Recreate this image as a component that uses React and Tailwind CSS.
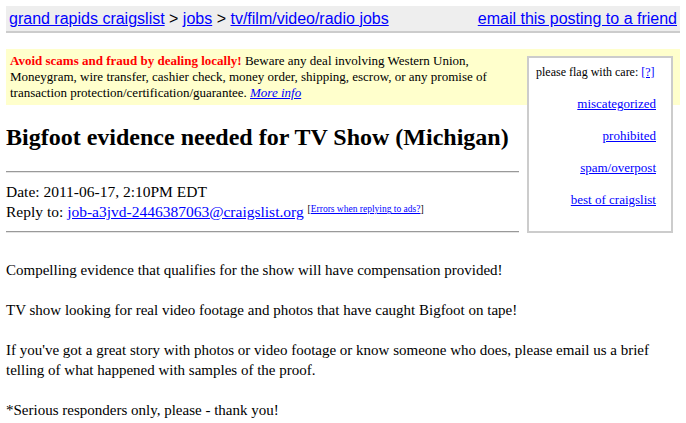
import React from "react";

const flags = ["miscategorized", "prohibited", "spam/overpost", "best of craigslist"];

export default function App() {
  return (
    <div className="min-h-screen bg-white px-[6px] pt-[6px] text-black font-['Liberation_Serif',serif]">
      <div className="flex items-center justify-between h-[27px] bg-[#eeeeee] border-b-2 border-[#cccccc] px-[3px] font-['Liberation_Sans',Arial,sans-serif] text-[16px] leading-[18px]">
        <div>
          <a href="#" className="text-[#0000ff] underline">grand rapids craigslist</a>
          {" > "}
          <a href="#" className="text-[#0000ff] underline">jobs</a>
          {" > "}
          <a href="#" className="text-[#0000ff] underline">tv/film/video/radio jobs</a>
        </div>
        <a href="#" className="text-[#0000ff] underline">email this posting to a friend</a>
      </div>

      <div className="mt-[16px] bg-[#ffffcc] px-[4px] py-[4px] text-[13px] leading-[16px]">
        <div className="float-right mt-[3px] mr-[3px] ml-[8px] w-[146px] h-[177px] border-2 border-[#cccccc] bg-white pt-[6px] pl-[7px] pr-[5px] flex flex-col gap-[16px] leading-[16px]">
          <div className="whitespace-nowrap text-[12px]">
            please flag with care:{" "}
            <a href="#" className="text-[#0000ff] underline">[?]</a>
          </div>
          {flags.map((f) => (
            <a key={f} href="#" className="self-end mr-[10px] text-[13px] text-[#0000ff] underline">
              {f}
            </a>
          ))}
        </div>
        <span className="font-bold text-[#ff0000]">Avoid scams and fraud by dealing locally!</span>{" "}
        Beware any deal involving Western Union,
        <br />
        Moneygram, wire transfer, cashier check, money order, shipping, escrow, or any promise of
        <br />
        transaction protection/certification/guarantee.{" "}
        <a href="#" className="italic text-[#0000ff] underline">More info</a>
      </div>

      <h2 className="mt-[17px] text-[24px] leading-[30px] font-bold whitespace-nowrap">
        Bigfoot evidence needed for TV Show (Michigan)
      </h2>
      <hr className="mt-[19px] overflow-hidden border-0 border-t border-b border-t-[#999999] border-b-[#e4e4e4]" />

      <div className="mt-[9px] text-[15.5px] leading-[20px]">
        Date: 2011-06-17, 2:10PM EDT
        <br />
        Reply to:{" "}
        <a href="#" className="text-[#0000ff] underline">job-a3jvd-2446387063@craigslist.org</a>{" "}
        <sup className="text-[9.5px] leading-none">
          [<a href="#" className="text-[#0000ff] underline">Errors when replying to ads?</a>]
        </sup>
      </div>
      <hr className="mt-[9px] overflow-hidden border-0 border-t border-b border-t-[#999999] border-b-[#e4e4e4]" />

      <div className="mt-[27px] text-[15px] leading-[20px]">
        Compelling evidence that qualifies for the show will have compensation provided!
        <br />
        <br />
        TV show looking for real video footage and photos that have caught Bigfoot on tape!
        <br />
        <br />
        If you've got a great story with photos or video footage or know someone who does, please email us a brief
        <br />
        telling of what happened with samples of the proof.
        <br />
        <br />
        *Serious responders only, please - thank you!
      </div>
    </div>
  );
}
